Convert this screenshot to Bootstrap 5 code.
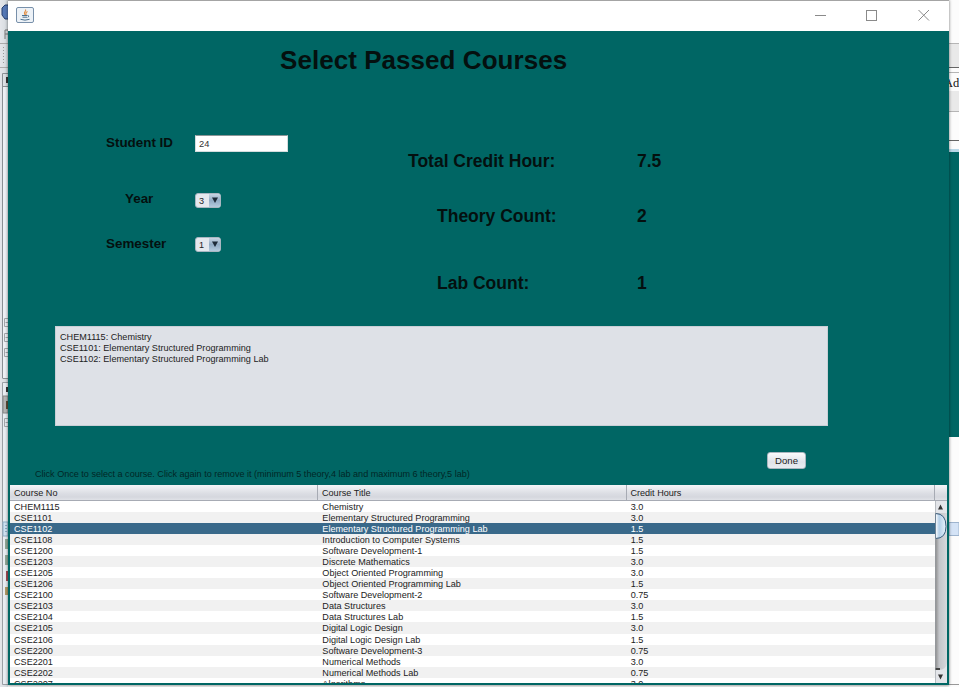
<!DOCTYPE html>
<html lang="en">
<head>
<meta charset="utf-8">
<title>Select Passed Courses</title>
<link href="https://cdn.jsdelivr.net/npm/bootstrap@5.3.0/dist/css/bootstrap.min.css" rel="stylesheet">
<style>
body{font-family:"Liberation Sans",Arial,sans-serif;font-size:9.1px;line-height:11px;color:#222;width:959px;height:687px;background:#f1f1f1}
.desk{width:959px;height:687px}
.strip-l{width:8px;background:linear-gradient(90deg,#e4e6ea,#d4dade)}
.strip-r{width:10px;background:#fcfcfc}
.strip-l svg,.strip-r svg{display:block}
.win{width:941px;height:685px;background:#006664;box-shadow:0 0 3px rgba(0,0,0,.55);z-index:1}
.titlebar{height:31px;background:#fff;border-top:1px solid #a4a4a4;padding:0 18px 2px 8px}
.heading{height:58px;font-size:26px;line-height:59px;letter-spacing:.05px;color:#04100f;padding-left:272px}
.form-area{height:237px}
.col-form{width:400px;padding:34px 0 0 98px}
.col-sum{padding-top:52px}
.line{height:40px}
.gap-a{margin-top:17px}.gap-b{margin-top:4px}.gap-c{margin-top:15px}.gap-d{margin-top:27px}
.lbl{width:89px;font-size:13.4px;color:#04100f;padding-bottom:2px}
.lbl-year{padding:0 0 4px 19px}
.field{width:93px;height:17px;font-size:9.3px;line-height:11px;padding:1px 3px 0;border:1px solid #d5dcdd;border-top-color:#8b9697;border-radius:0;color:#333}
.combo{width:26px;height:15px;border-radius:3px;background:#e4e8ee;border:1px solid #a9b7c2;overflow:hidden}
.combo-val{width:13px;padding-left:3px;line-height:14px}
.combo-arrow{width:12px;padding-left:1px;background:linear-gradient(#c8d5e3,#91abc4 50%,#b4cade)}
.sum{width:229px;font-size:17.5px;color:#04100f}
.in-a{padding-left:29px}
.picked{width:773px;height:100px;margin-left:47px;padding:5px 4px;background:#dee1e7;border:1px solid #c9cfd6;color:#222}
.foot{height:59px;padding-left:27px}
.hint{width:732px;padding-top:43px;letter-spacing:-.015px;color:#002726}
.done{width:39px;height:17px;margin-top:26px;padding:1px 0 0;font-size:9.6px;line-height:14px;border:1px solid #aab6bf;border-radius:3px;background:linear-gradient(#fafbfc,#dfe3e9 60%,#e9edf2);color:#222}
.grid{height:198px;margin:0 2px;background:#fff}
.ghead{height:15.6px;background:linear-gradient(#f4f5f8,#dcdee4 55%,#d5d7de 80%,#e0e2e7);border-bottom:1px solid #a7abb4}
.ghead>div{width:308.4px;padding:3px 0 0 4px;border-right:1px solid #a7abb4}
.ghead>div+div{padding-left:3.6px}
.gbody{height:182.4px}
.rows{width:925px}
.grow{height:11.08px;line-height:12px;white-space:nowrap}
.grow>div{width:308.4px;padding-left:4px}
.grow:nth-child(even){background:#f1f1f1}
.grow.sel{background:#39698a;color:#fff}
.scroll{width:12px;background:#e3e5e9}
.scroll svg{display:block}
</style>
<script src="https://cdn.jsdelivr.net/npm/bootstrap@5.3.0/dist/js/bootstrap.bundle.min.js"></script>
</head>
<body class="overflow-hidden">
<div class="desk d-flex overflow-hidden">
  <div class="strip-l flex-shrink-0">
    <svg width="8" height="687" viewBox="0 0 8 687">
      <path d="M8 5H5L2 8V15L5 19H8" fill="#5578b5" stroke="#263f70"/>
      <path d="M5 39V30H8M5 34H8" fill="none" stroke="#777"/>
      <path d="M0 43.500H8M0 67.500H8" stroke="#aaa"/>
      <path d="M3.500 47V64" stroke="#999" stroke-dasharray="1 2"/>
      <path d="M3 87H8V378H3Z" fill="#edf0f4"/>
      <path d="M2.500 378V73.500H8M2.500 86.500H8M2.500 378.500H8" fill="none" stroke="#8a8f94"/>
      <path d="M6 77H8V83H6Z" fill="#333"/>
      <path d="M8 318.500H4.500V326.500H8M8 333.500H4.500V341.500H8M8 348.500H4.500V356.500H8M5.500 322.500H8M5.500 337.500H8M5.500 352.500H8" fill="none" stroke="#a2a6aa"/>
      <path d="M8 382.500H2.500V684.500H8" fill="#e8edf2" stroke="#9a9fa5"/>
      <path d="M6 387H8V392H6Z" fill="#333"/>
      <path d="M3 396H8V413H3Z" fill="#b5b5b5" stroke="#888"/><path d="M6 401H8V409H6Z" fill="#5c4c35"/>
      <path d="M8 418.500H4.500V426.500H8M5.500 422.500H8" fill="none" stroke="#a2a6aa"/>
      <path d="M3 522H8V536H3Z" fill="#cfe2f0" stroke="#90b0c8"/><path d="M6 525V534" stroke="#47789a" stroke-dasharray="1 2"/>
      <path d="M5 539H8V549H5ZM5 555H8V565H5Z" fill="#91a899"/><path d="M6 571H8V581H6Z" fill="#a34c55"/><path d="M5 587H8V595H5Z" fill="#b19b67"/>
    </svg>
  </div>
  <main class="win flex-shrink-0 position-relative">
    <div class="titlebar d-flex align-items-center justify-content-between">
      <svg width="19" height="17" viewBox="0 0 19 17" aria-label="Java">
        <rect x=".5" y=".5" width="17" height="15" rx="1.500" fill="#edf2f7" stroke="#7890aa"/>
        <path d="M9.500 2.500C11 4 6.500 5 9 8M11.500 4.500C9 5.500 10 6.500 10 8" fill="none" stroke="#e38a3a" stroke-width="1.100"/>
        <path d="M6 8.500H11.500M6.500 10.200H11M11.800 8.500Q14 8.700 11.800 10.500M4.500 12.300Q9 14 13.500 12.300" fill="none" stroke="#4d718f" stroke-width="1"/>
      </svg>
      <svg width="116" height="14" viewBox="0 0 116 14" fill="none" stroke="#8a8a8a">
        <path d="M0 7.500H11"/><rect x="51.500" y="2.500" width="10" height="10"/><path d="M103.500 2L114 12.500M114 2L103.500 12.500"/>
      </svg>
    </div>
    <div class="heading fw-bold">Select Passed Courses</div>
    <div class="form-area d-flex">
      <div class="col-form">
        <div class="line d-flex align-items-center"><label class="lbl fw-bold" for="sid">Student ID</label><input id="sid" class="field form-control" value="24"></div>
        <div class="line gap-a d-flex align-items-center"><div class="lbl lbl-year fw-bold">Year</div>
          <div class="combo d-flex"><span class="combo-val">3</span><span class="combo-arrow d-flex align-items-center justify-content-center"><svg width="6" height="6" viewBox="0 0 6 6"><path d="M0 .5H6L3 6Z" fill="#1d2a38"/></svg></span></div></div>
        <div class="line gap-b d-flex align-items-center"><div class="lbl fw-bold">Semester</div>
          <div class="combo d-flex"><span class="combo-val">1</span><span class="combo-arrow d-flex align-items-center justify-content-center"><svg width="6" height="6" viewBox="0 0 6 6"><path d="M0 .5H6L3 6Z" fill="#1d2a38"/></svg></span></div></div>
      </div>
      <div class="col-sum fw-bold">
        <div class="line d-flex align-items-center"><div class="sum">Total Credit Hour:</div><div class="sum w-auto">7.5</div></div>
        <div class="line gap-c d-flex align-items-center"><div class="sum in-a">Theory Count:</div><div class="sum w-auto">2</div></div>
        <div class="line gap-d d-flex align-items-center"><div class="sum in-a">Lab Count:</div><div class="sum w-auto">1</div></div>
      </div>
    </div>
    <div class="picked">
      <div>CHEM1115: Chemistry</div>
      <div>CSE1101: Elementary Structured Programming</div>
      <div>CSE1102: Elementary Structured Programming Lab</div>
    </div>
    <div class="foot d-flex align-items-start">
      <div class="hint">Click Once to select a course. Click again to remove it (minimum 5 theory,4 lab and maximum 6 theory,5 lab)</div>
      <button class="btn done">Done</button>
    </div>
    <div class="grid d-block overflow-hidden">
      <div class="ghead d-flex"><div>Course No</div><div>Course Title</div><div>Credit Hours</div></div>
      <div class="gbody d-flex overflow-hidden">
        <div class="rows">
          <div class="grow d-flex"><div>CHEM1115</div><div>Chemistry</div><div>3.0</div></div>
          <div class="grow d-flex"><div>CSE1101</div><div>Elementary Structured Programming</div><div>3.0</div></div>
          <div class="grow sel d-flex"><div>CSE1102</div><div>Elementary Structured Programming Lab</div><div>1.5</div></div>
          <div class="grow d-flex"><div>CSE1108</div><div>Introduction to Computer Systems</div><div>1.5</div></div>
          <div class="grow d-flex"><div>CSE1200</div><div>Software Development-1</div><div>1.5</div></div>
          <div class="grow d-flex"><div>CSE1203</div><div>Discrete Mathematics</div><div>3.0</div></div>
          <div class="grow d-flex"><div>CSE1205</div><div>Object Oriented Programming</div><div>3.0</div></div>
          <div class="grow d-flex"><div>CSE1206</div><div>Object Oriented Programming Lab</div><div>1.5</div></div>
          <div class="grow d-flex"><div>CSE2100</div><div>Software Development-2</div><div>0.75</div></div>
          <div class="grow d-flex"><div>CSE2103</div><div>Data Structures</div><div>3.0</div></div>
          <div class="grow d-flex"><div>CSE2104</div><div>Data Structures Lab</div><div>1.5</div></div>
          <div class="grow d-flex"><div>CSE2105</div><div>Digital Logic Design</div><div>3.0</div></div>
          <div class="grow d-flex"><div>CSE2106</div><div>Digital Logic Design Lab</div><div>1.5</div></div>
          <div class="grow d-flex"><div>CSE2200</div><div>Software Development-3</div><div>0.75</div></div>
          <div class="grow d-flex"><div>CSE2201</div><div>Numerical Methods</div><div>3.0</div></div>
          <div class="grow d-flex"><div>CSE2202</div><div>Numerical Methods Lab</div><div>0.75</div></div>
          <div class="grow d-flex"><div>CSE2207</div><div>Algorithms</div><div>3.0</div></div>
        </div>
        <div class="scroll">
          <svg width="12" height="183" viewBox="0 0 12 183">
            <defs><linearGradient id="track"><stop offset="0" stop-color="#858585"/><stop offset=".35" stop-color="#c3c5c9"/><stop offset="1" stop-color="#d6d8dc"/></linearGradient>
            <linearGradient id="thumb"><stop offset="0" stop-color="#fff"/><stop offset=".35" stop-color="#b4cfe8"/><stop offset="1" stop-color="#e8f3fc"/></linearGradient></defs>
            <path d="M0 12H12V162Q11 169 4 169H0Z" fill="url(#track)"/>
            <path d="M0 168H5" stroke="#444" stroke-width="2"/>
            <path d="M.5 12.500Q11 12.500 11 25.500Q11 37.500 .5 37.500Z" fill="url(#thumb)" stroke="#385c7c"/>
            <path d="M3 8.500L5.500 3.500L8 8.500ZM3 173.500L5.500 178.500L8 173.500Z" fill="#333"/>
            <path d="M.5 0V183" stroke="#9b9fa6" stroke-width=".6"/>
          </svg>
        </div>
      </div>
    </div>
  </main>
  <div class="strip-r flex-shrink-0">
    <svg width="10" height="687" viewBox="0 0 10 687">
      <path d="M0 44H10V67H0ZM0 91H10V111H0Z" fill="#e9e9e9"/>
      <path d="M0 43.500H10M0 111.500H10M0 72.500H10" stroke="#b5b5b5"/><path d="M0 67.500H10M0 140.500H10" stroke="#666"/>
      <text x="-5" y="87" font-family="Liberation Serif, serif" font-size="12.5" fill="#111">Ad</text>
      <path d="M0 149H10V152H0Z" fill="#b9d8e8"/><path d="M0 152H10V437H0Z" fill="#006664"/>
      <path d="M0 522.500H10V535.500H0Z" fill="#d4e3f6" stroke="#9eb4ce"/><path d="M0 684.500H10" stroke="#999"/>
    </svg>
  </div>
</div>
</body>
</html>
